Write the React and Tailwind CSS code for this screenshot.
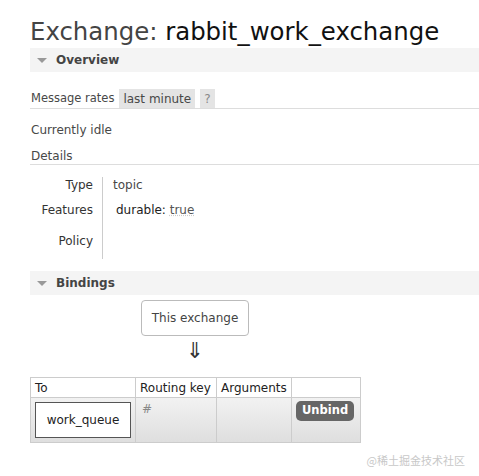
export default function App() {
  const font = { fontFamily: '"DejaVu Sans", Verdana, sans-serif' };
  return (
    <div className="w-[479px] h-[476px] bg-white overflow-hidden text-[12px] text-[#484848]" style={font}>
      <div className="pl-[30px]">
        <h1 className="pt-[16px] text-[24.4px] leading-[32px] font-normal text-[#444] whitespace-nowrap">
          Exchange: <span className="text-[#111]">rabbit_work_exchange</span>
        </h1>
        <div className="h-[24px] bg-[#f4f4f4] flex items-center pl-[7px]">
          <span className="w-0 h-0 border-l-[5px] border-r-[5px] border-t-[5px] border-l-transparent border-r-transparent border-t-[#999] mr-[9px]"></span>
          <span className="font-bold text-[12px] text-[#444]">Overview</span>
        </div>
        <div className="mt-[17px] h-[20px] flex items-center border-b border-[#ddd]">
          <span className="pl-[1px] text-[11.5px]">Message rates</span>
          <span className="ml-[5px] bg-[#e4e4e4] px-[4px] h-[19px] flex items-center">last minute</span>
          <span className="ml-[5px] bg-[#e4e4e4] px-[4px] h-[19px] flex items-center text-[#888]">?</span>
        </div>
        <div className="mt-[12px] pl-[1px] h-[18px] flex items-center">Currently idle</div>
        <div className="mt-[8px] pl-[1px] h-[18px] flex items-center border-b border-[#ddd]">Details</div>
        <div className="mt-[12px] flex">
          <div className="w-[63px] text-right text-[#333] flex flex-col">
            <div className="h-[20px] leading-[16px]">Type</div>
            <div className="h-[30px] leading-[26px]">Features</div>
            <div className="h-[32px] leading-[28px]">Policy</div>
          </div>
          <div className="ml-[9px] border-l border-[#ccc] pl-[10px] flex flex-col">
            <div className="h-[20px] leading-[16px]">topic</div>
            <div className="h-[30px] leading-[26px] pl-[3px] text-[#222]">
              durable: <span className="text-[#555] underline decoration-dotted decoration-[#ccc]">true</span>
            </div>
            <div className="h-[32px]"></div>
          </div>
        </div>
        <div className="mt-[12px] h-[24px] bg-[#f4f4f4] flex items-center pl-[7px]">
          <span className="w-0 h-0 border-l-[5px] border-r-[5px] border-t-[5px] border-l-transparent border-r-transparent border-t-[#999] mr-[9px]"></span>
          <span className="font-bold text-[12px] text-[#444]">Bindings</span>
        </div>
        <div className="w-[330px] flex flex-col items-center">
          <div className="mt-[5px] border border-[#bbb] rounded-[4px] w-[108px] h-[36px] flex items-center justify-center text-[#444]">This exchange</div>
          <div className="mt-[3px] text-[22px] leading-[24px] text-[#333]">⇓</div>
        </div>
        <table className="mt-[14px] border-collapse text-[12px]">
          <thead>
            <tr className="h-[20px]">
              <th className="border border-[#ccc] font-normal text-left px-[4px] w-[105px] text-[#222]">To</th>
              <th className="border border-[#ccc] font-normal text-left px-[4px] w-[81px] text-[#222]">Routing key</th>
              <th className="border border-[#ccc] font-normal text-left px-[4px] w-[75px] text-[#222]">Arguments</th>
              <th className="border border-[#ccc] font-normal w-[69px]"></th>
            </tr>
          </thead>
          <tbody>
            <tr className="h-[45px] bg-gradient-to-b from-[#f2f2f2] to-[#dedede]">
              <td className="border border-[#ccc] p-[4px] align-top">
                <div className="bg-white border border-[#555] h-[36px] flex items-center justify-center text-[#222]">work_queue</div>
              </td>
              <td className="border border-[#ccc] px-[6px] pt-[2px] align-top text-[#888]">#</td>
              <td className="border border-[#ccc]"></td>
              <td className="border border-[#ccc] align-top pt-[3px] pl-[4px]">
                <span className="inline-flex items-center bg-[#666] text-white font-bold text-[11.5px] rounded-[5px] px-[6px] h-[20px]">Unbind</span>
              </td>
            </tr>
          </tbody>
        </table>
        <div className="mt-[9px] text-right pr-[14px] text-[11px] text-[#c8c8c8]" style={{ fontFamily: '"Noto Sans CJK SC", sans-serif' }}>@稀土掘金技术社区</div>
      </div>
    </div>
  );
}
